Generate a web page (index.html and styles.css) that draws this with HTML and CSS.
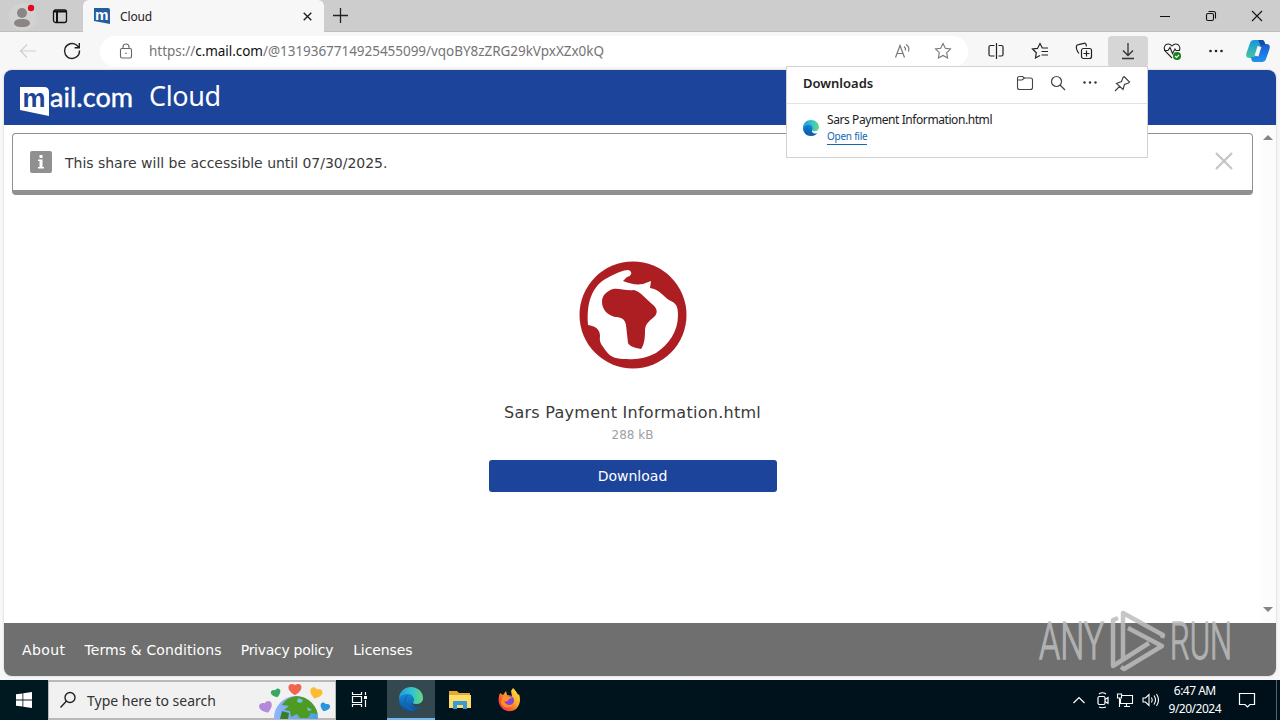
FILE: index.html
```
<!DOCTYPE html>
<html lang="en">
<head>
    <meta charset="UTF-8">
    <title>Cloud</title>
    <link rel="stylesheet" href="styles.css">
</head>
<body>
    <div class="browser">
        <div class="tab-strip">
            <div class="tab-tools">
                <svg width="30" height="30" viewBox="0 0 30 30"><circle cx="15" cy="15" r="14" fill="#d2d2d2"/><circle cx="14" cy="11" r="5" fill="#8b8684"/><path d="M6 22c0-4 3-5 8-5s8 1 8 5c-2 3-5 3-8 3s-6 0-8-3z" fill="#8b8684"/><circle cx="23" cy="6" r="3.2" fill="#e00b1c"/></svg>
                <svg class="tab-actions" width="16" height="16" viewBox="0 0 16 16" fill="none" stroke="#111" stroke-width="1.3"><rect x="1.5" y="1" width="13" height="12.5" rx="2"/><path d="M2 2.500h12M5 3.500v10" stroke-width="2"/></svg>
            </div>
            <div class="tab">
                <svg width="16" height="16" viewBox="0 0 16 16"><path d="M0 0h14q2 0 2 2v14L0 13z" fill="#245d9f"/><text x="1" y="11.5" class="badge-letter" font-size="14" textLength="13.5" lengthAdjust="spacingAndGlyphs" fill="#fff">m</text></svg>
                <span class="tab-title">Cloud</span>
                <svg class="tab-close" width="9" height="9" viewBox="0 0 9 9" stroke="#222" stroke-width="1.4"><path d="M.7.7l7.6 7.6M8.3.7L.7 8.3"/></svg>
            </div>
            <svg class="new-tab" width="15" height="15" viewBox="0 0 15 15" stroke="#222" stroke-width="1.3"><path d="M7.5 0v15M0 7.5h15"/></svg>
            <div class="window-buttons">
                <svg width="12" height="12" viewBox="0 0 12 12" stroke="#111"><path d="M1 6.5h10"/></svg>
                <svg width="12" height="12" viewBox="0 0 12 12" fill="none" stroke="#111" stroke-width="1.1"><rect x="1.5" y="3.5" width="7" height="7" rx="1.5"/><path d="M3.5 1.5h5q2 0 2 2v5"/></svg>
                <svg width="12" height="12" viewBox="0 0 12 12" stroke="#111" stroke-width="1.1"><path d="M1 1l10 10M11 1L1 11"/></svg>
            </div>
        </div>

        <div class="toolbar">
            <div class="nav-buttons">
                <svg width="18" height="18" viewBox="0 0 18 18" fill="none" stroke="#cfcfcf" stroke-width="1.2"><path d="M17 9H1.5M8 2.5L1.5 9 8 15.5"/></svg>
                <svg width="18" height="18" viewBox="0 0 18 18" fill="none" stroke="#222" stroke-width="1.4"><path d="M16.5 8.500a7.500 7.500 0 1 1-3-5.500l2.500 2.500M16.300 1v4.700h-4.700"/></svg>
            </div>
            <div class="address-bar">
                <svg width="14" height="16" viewBox="0 0 14 16" fill="none" stroke="#666" stroke-width="1.1"><rect x="1.5" y="5.5" width="11" height="9.5" rx="1.5"/><path d="M4 5.500V4a3 3 0 0 1 6 0v1.500"/><circle cx="7" cy="10.3" r=".8" fill="#666" stroke="none"/></svg>
                <span class="url">https://<b>c.mail.com</b>/@1319367714925455099/vqoBY8zZRG29kVpxXZx0kQ</span>
                <svg class="read-aloud" width="18" height="16" viewBox="0 0 18 16" fill="none" stroke="#777" stroke-width="1.2"><path d="M1.500 14.500L6 2.500l4.500 12M3 10.500h6M10 3.500q2 1.500 1.500 4M12 1.500q4 2.500 2.500 7"/></svg>
                <svg class="star" width="18" height="18" viewBox="0 0 18 18" fill="none" stroke="#777" stroke-width="1.1"><path d="M9 1.500l2.300 4.800 5.200.700-3.800 3.700.9 5.300L9 13.500 4.400 16l.9-5.300L1.500 7l5.200-.7z"/></svg>
            </div>
            <div class="toolbar-buttons">
                <span class="tool"><svg width="18" height="18" viewBox="0 0 18 18" fill="none" stroke="#222" stroke-width="1.2"><path d="M9.500 1v16M7.500 3.500H3.500Q2 3.500 2 5v7.500Q2 14 3.500 14h4M11.500 3.500h3Q16 3.500 16 5v7.500q0 1.500-1.500 1.500h-3"/></svg></span>
                <span class="tool"><svg width="18" height="18" viewBox="0 0 18 18" fill="none" stroke="#222" stroke-width="1.2"><path d="M9 13.500L4.500 16l.8-5.300L1.500 7l5-.6L9 1.500l2.300 4.500H17M10.500 9.500H17M10.500 13H17"/></svg></span>
                <span class="tool"><svg width="18" height="18" viewBox="0 0 18 18" fill="none" stroke="#222" stroke-width="1.2"><rect x="6.500" y="6.500" width="10" height="10" rx="2"/><path d="M11.500 8.500v6M8.500 11.500h6M4 11.500C2 9 1 6 1.500 4q0-1 2-1.300L9 1.300q1.500-.4 2 1l.5 2"/></svg></span>
                <span class="tool active"><svg width="18" height="18" viewBox="0 0 18 18" fill="none" stroke="#333" stroke-width="1.3"><path d="M9 1v12M4 8.500l5 5 5-5M3 16.500h12"/></svg></span>
                <span class="tool"><svg width="18" height="18" viewBox="0 0 18 18" fill="none" stroke="#222" stroke-width="1.1"><path d="M9 16L2.500 9.500Q0 6 2.500 3q3.500-2.500 6.500 1 3-3.500 6.500-1Q18 6 16 8.500M1 8.500h4l2-3 2.500 6L12 7l1 1.500h4"/><circle cx="14" cy="14" r="4" fill="#16821b" stroke="none"/><path d="M12 14l1.500 1.500L16 13" stroke="#fff"/></svg></span>
                <span class="tool"><svg width="14" height="4" viewBox="0 0 14 4" fill="#222"><circle cx="1.500" cy="2" r="1.300"/><circle cx="7" cy="2" r="1.300"/><circle cx="12.500" cy="2" r="1.300"/></svg></span>
                <span class="tool copilot"><svg width="24" height="24" viewBox="0 0 24 24">
                    <defs>
                        <linearGradient id="cpLeft" x1="0" y1="0" x2="0" y2="1"><stop offset="0" stop-color="#1a94e0"/><stop offset="1" stop-color="#42c89a"/></linearGradient>
                        <linearGradient id="cpRight" x1="0" y1="0" x2="0" y2="1"><stop offset="0" stop-color="#1a5bd0"/><stop offset="1" stop-color="#2190f5"/></linearGradient>
                    </defs>
                    <path d="M8 1h8q2 0 2.500 2l1 3h-5L11 17q-1 2-3 2H4q-5 0-3.500-5L4 4q1-3 4-3z" fill="url(#cpLeft)"/>
                    <path d="M16 23H8q-2 0-2.500-2L5 18h3q2 0 3-3l2.500-8q.7-2 3-2H20q5 0 3.500 5L20 20q-1 3-4 3z" fill="url(#cpRight)"/>
                    <path d="M13.500 7.500L10.500 17" stroke="#f7f7f7" stroke-width="4"/>
                    <path d="M12 1h4q2 0 2.500 2l1 3h-5z" fill="#154c9c"/>
                </svg></span>
            </div>
        </div>

        <div class="page">
            <div class="page-header">
                <svg class="logo" width="114" height="34" viewBox="0 0 114 34">
                    <path d="M0 3h24q5 0 5 5v24L0 26z" fill="#fff"/>
                    <text x="2.500" y="22.500" class="badge-letter" font-size="26" textLength="23" lengthAdjust="spacingAndGlyphs" fill="#1c449b">m</text>
                    <text x="30" y="23" class="logo-text" font-size="27" textLength="83" lengthAdjust="spacingAndGlyphs" fill="#fff">ail.com</text>
                </svg>
                <span class="page-title">Cloud</span>
            </div>
            <div class="page-body">
                <div class="content">
                    <div class="notice">
                        <span class="info-icon"><svg width="22" height="22" viewBox="0 0 22 22" fill="#fff"><rect x="9.500" y="4" width="3" height="3"/><path d="M8 8.500h4.500V16H14v1.500H8V16h1.500v-6H8z"/></svg></span>
                        <span class="notice-text">This share will be accessible until 07/30/2025.</span>
                        <svg class="notice-close" width="18" height="18" viewBox="0 0 18 18" stroke="#c4c4c4" stroke-width="2.200"><path d="M1 1l16 16M17 1L1 17"/></svg>
                    </div>
                    <div class="share">
                        <svg class="globe" width="108" height="108" viewBox="0 0 108 108">
                            <circle cx="54" cy="54" r="53.500" fill="#ad1e23"/>
                            <path d="M9 64C7 38 15 23 30 16c8-4 14-7 19-7 5 1 4 6-1 7l-4 4c8 3 13 4 20 3l8-3-1 7c9 1 13 8 19 12 7 3 9 6 9 15 0 17-9 29-22 38-10 5-19 7-29 6-10 0-16-1-21-8-4-6-7-8-6-15 0-7-5-10-12-11z" fill="#fff"/>
                            <path d="M23 41c0-7 5-11 11-13 6-1 13 2 21 1 7 2 12 9 18 14 5 4 6 8 3 12-5 5-10 7-10 15 0 8-1 14-4 18-6-1-12-3-13-6l-2-18c-1-6-5-8-11-8-8-2-13-8-13-15z" fill="#ad1e23"/>
                        </svg>
                        <div class="file-name">Sars Payment Information.html</div>
                        <div class="file-size">288 kB</div>
                        <button class="download">Download</button>
                    </div>
                </div>
                <div class="scrollbar">
                    <span class="arrow-up"></span>
                    <span class="arrow-down"></span>
                </div>
            </div>
            <div class="page-footer">
                <a class="link-about">About</a>
                <a class="link-terms">Terms &amp; Conditions</a>
                <a class="link-privacy">Privacy policy</a>
                <a class="link-licenses">Licenses</a>
            </div>
        </div>

        <div class="downloads">
            <div class="downloads-header">
                <span class="downloads-title">Downloads</span>
                <svg width="18" height="16" viewBox="0 0 18 16" fill="none" stroke="#444" stroke-width="1.1"><path d="M1.500 3.500q0-2 2-2h3L8.500 3H14.500q2 0 2 2v7.500q0 2-2 2h-11q-2 0-2-2zM1.500 5H6l2.500-2"/></svg>
                <svg width="16" height="16" viewBox="0 0 16 16" fill="none" stroke="#444" stroke-width="1.2"><circle cx="6.500" cy="6.500" r="5"/><path d="M10 10l5 5"/></svg>
                <svg width="16" height="16" viewBox="0 0 16 16" fill="#333"><circle cx="2.500" cy="7.500" r="1.200"/><circle cx="8" cy="7.500" r="1.200"/><circle cx="13.500" cy="7.500" r="1.200"/></svg>
                <svg width="17" height="17" viewBox="0 0 17 17" fill="none" stroke="#444" stroke-width="1.2"><path d="M10 1.500l5.500 5.500-1 1-4 1.500-1.500 5-6.500-6 5-2L9 2.500zM6 11l-5 5"/></svg>
            </div>
            <div class="download-item">
                <svg class="item-icon" width="16" height="16" viewBox="0 0 24 24"><use href="#edge"/></svg>
                <div class="item-info">
                    <div class="item-name">Sars Payment Information.html</div>
                    <a class="item-open">Open file</a>
                </div>
            </div>
        </div>

        <svg class="watermark" width="196" height="64" viewBox="0 0 196 64">
            <text x="1" y="51" textLength="65" lengthAdjust="spacingAndGlyphs">ANY</text>
            <text x="132" y="51" textLength="62" lengthAdjust="spacingAndGlyphs">RUN</text>
            <g fill="none" stroke-width="4.500" stroke-linejoin="round">
                <path d="M80 10l-5 2v46l36-23M85 52V5l40 22-1 3M90 20l34 18-38 23-3-2"/>
            </g>
        </svg>
    </div>

    <div class="taskbar">
        <div class="start"><svg width="16" height="16" viewBox="0 0 16 16" fill="#fff"><path d="M0 2.300L6.500 1.400v6.200H0zM7.300 1.300L16 0v7.600H7.300zM0 8.400h6.500v6.200L0 13.700zM7.300 8.400H16V16l-8.700-1.300z"/></svg></div>
        <div class="search">
            <svg width="18" height="18" viewBox="0 0 18 18" fill="none" stroke="#222" stroke-width="1.4"><circle cx="11" cy="6.500" r="5"/><path d="M7.500 10L1.500 16.500"/></svg>
            <span class="search-text">Type here to search</span>
            <svg class="search-art" width="76" height="38" viewBox="0 0 76 38">
                <defs>
                    <path id="heart" d="M0 6C-11 0-6-8 0-4 6-8 11 0 0 6z"/>
                    <linearGradient id="sea"><stop offset="0" stop-color="#8fb4ff"/><stop offset="1" stop-color="#4c9fe0"/></linearGradient>
                    <clipPath id="earth"><circle cx="38" cy="37" r="22"/></clipPath>
                </defs>
                <circle cx="38" cy="37" r="22" fill="url(#sea)"/>
                <g clip-path="url(#earth)" fill="#4f9a22">
                    <path d="M24 24c5-8 14-10 22-8 8 4 13 12 14 17l-7-1-3 5h-8l-3-4-6 3-1-6-6-1 5-4z"/>
                    <path d="M24 30l7 2-1 6h-8z" fill="#357d2a"/>
                    <path d="M40 17l5 2-2 3-4-1zM49 26l5 3-4 1z" fill="#6cc5ee"/>
                </g>
                <use href="#heart" x="37" y="8" fill="#f06450"/>
                <use href="#heart" transform="translate(18 12) rotate(-18) scale(.75)" fill="#37a862"/>
                <use href="#heart" transform="translate(58 12) rotate(18) scale(.95)" fill="#fdbb32"/>
                <use href="#heart" transform="translate(8 26) rotate(-20)" fill="#b488da"/>
                <use href="#heart" transform="translate(67 26) rotate(18) scale(.75)" fill="#2b94dc"/>
            </svg>
        </div>
        <div class="task task-view"><svg width="18" height="18" viewBox="0 0 18 18" fill="none" stroke="#fff" stroke-width="1.2"><path d="M1.500 1v2.500h9V1M1.500 16v-2.500h9V16M1.500 5.500h9v6h-9zM14.500 1v3M14.500 9v7"/><path d="M13 6.500h3" stroke-width="3"/></svg></div>
        <div class="task open">
            <svg width="24" height="24" viewBox="0 0 24 24">
                <defs>
                    <linearGradient id="edgeTop" x1="0" y1="0" x2="1" y2="0"><stop offset="0" stop-color="#249bd9"/><stop offset=".55" stop-color="#33c4cf"/><stop offset="1" stop-color="#68d97a"/></linearGradient>
                    <linearGradient id="edgeLow" x1="0" y1="0" x2="0" y2="1"><stop offset="0" stop-color="#128bd9"/><stop offset="1" stop-color="#0753a0"/></linearGradient>
                </defs>
                <g id="edge">
                    <path d="M0 12C0 5 5 0 12 0s12 5 12 11c0 4-3 6-7 6-2 0-4-1-3-2 2-2 0-7-5-7-4 0-7 2-9 4z" fill="url(#edgeTop)"/>
                    <path d="M0 12c1-4 5-5 9-5 5 0 7 5 5 8-1 1-1 4 2 5 2 1 4 0 6-1-2 3-6 5-10 5C5 24 0 19 0 12z" fill="url(#edgeLow)"/>
                    <path d="M9 8c-5 6 0 14 7 15-5 2-11-2-11-8 0-3 1-6 4-7z" fill="#1766b5"/>
                </g>
            </svg>
        </div>
        <div class="task"><svg width="22" height="20" viewBox="0 0 22 20"><path d="M0 1h8l2 2h11v15H0z" fill="#e7a92c"/><path d="M0 5h22v13H0z" fill="#ffda6c"/><path d="M4 19v-7q0-1 1-1h12q1 0 1 1v7h-4v-4H8v4z" fill="#369ad4"/></svg></div>
        <div class="task"><svg width="24" height="24" viewBox="0 0 24 24">
            <defs><linearGradient id="fire" x1="1" y1="0" x2="0" y2="1"><stop offset="0" stop-color="#fff04a"/><stop offset=".4" stop-color="#ffad25"/><stop offset=".7" stop-color="#ff542e"/><stop offset="1" stop-color="#e62083"/></linearGradient></defs>
            <path d="M3 5l3 2 3-4 1 4 5 1-1-5 2-3c2 2 4 4 5 7l1-1c2 6 1 11-3 15-7 5-15 1-17-6-1-4 0-7 1-10z" fill="url(#fire)"/>
            <circle cx="12" cy="12.500" r="5" fill="#8245dc"/><path d="M6 9c3-2 7-1 9 1l-3 1c-1 3-4 3-5 2 2 5 8 5 10 1-1 7-12 8-13 0z" fill="#ff9025"/>
        </svg></div>
        <div class="tray">
            <svg width="14" height="16" viewBox="0 0 14 16" fill="none" stroke="#fff" stroke-width="1.2"><path d="M1.500 11L7 5.500l5.500 5.500"/></svg>
            <svg class="meet" width="14" height="18" viewBox="0 0 14 18" fill="none" stroke="#fff" stroke-width="1.2"><rect x="2" y="5.500" width="7" height="8" rx="1.500"/><path d="M9 8.500l3-2v6l-3-2M3 3q3-2.500 7 0M3 16q3 1.500 7 0"/></svg>
            <svg width="18" height="16" viewBox="0 0 18 16" fill="none" stroke="#fff" stroke-width="1.1"><path d="M6 3.500h10.500v8H4.500V7M8 14.500h6M10.500 12v2.500M1.500 2h4v4h-4zM3.500 6v9"/></svg>
            <svg class="volume" width="18" height="16" viewBox="0 0 18 16" fill="none" stroke="#fff" stroke-width="1.1"><path d="M1 6h2.500L7 2.500v11L3.500 10H1zM9.500 5.500q1.500 2.500 0 5M12 3.500q3 4.500 0 9M14.500 2q4 6 0 12"/></svg>
            <div class="clock">
                <span class="time">6:47 AM</span>
                <span class="date">9/20/2024</span>
            </div>
            <svg class="action-center" width="18" height="18" viewBox="0 0 18 18" fill="none" stroke="#fff" stroke-width="1.2"><path d="M1.500 2.500h15v11H12L9.500 16 7 13.500H1.500z"/></svg>
            <span class="show-desktop"></span>
        </div>
    </div>
</body>
</html>
```
FILE: styles.css
```
* {
    box-sizing: border-box;
}
body {
    margin: 0;
    width: 1280px;
    height: 720px;
    overflow: hidden;
    font-family: "Noto Sans", "Open Sans", sans-serif;
    color: #222;
    background-color: #f7f7f7;
}
svg {
    display: block;
    flex: none;
    overflow: visible;
}
.browser {
    position: relative;
    height: 680px;
    padding: 0 4px 4px;
}
.tab-strip {
    display: flex;
    height: 32px;
    margin: 0 -4px;
    background-color: #cdcdcd;
    border-bottom: 1px solid #bebebe;
}
.tab-tools {
    display: flex;
    align-items: center;
    width: 83px;
    padding: 2px 0 0 8px;
}
.tab-actions {
    margin-left: 14px;
}
.tab {
    display: flex;
    align-items: center;
    width: 241px;
    height: 32px;
    padding: 0 12px 0 11px;
    background-color: #f7f7f7;
    border-radius: 6px 6px 0 0;
}
.tab-title {
    flex: 1;
    margin-left: 10px;
    font-size: 12px;
    letter-spacing: -0.15px;
    white-space: nowrap;
}
.new-tab {
    margin: 8px 0 0 9px;
}
.window-buttons {
    display: flex;
    align-items: center;
    gap: 34px;
    margin-left: auto;
    padding-right: 17px;
}
.badge-letter {
    font-family: "Liberation Sans", sans-serif;
    font-weight: bold;
}
.toolbar {
    display: flex;
    align-items: center;
    height: 38px;
    margin: 0 -4px;
}
.nav-buttons {
    display: flex;
    flex: none;
    gap: 26px;
    width: 100px;
    padding-left: 19px;
}
.address-bar {
    display: flex;
    flex: none;
    align-items: center;
    width: 868px;
    height: 31px;
    padding: 0 16px 0 19px;
    background-color: #fff;
    border-radius: 16px;
}
.url {
    margin-left: 16px;
    font-size: 13.5px;
    letter-spacing: -0.04px;
    color: #757575;
    white-space: nowrap;
}
.url b {
    font-weight: normal;
    color: #111;
}
.read-aloud {
    margin-left: auto;
}
.star {
    margin-left: 22px;
}
.toolbar-buttons {
    display: flex;
    flex: none;
    margin-left: 6px;
}
.tool {
    display: flex;
    flex: none;
    align-items: center;
    justify-content: center;
    width: 40px;
    height: 31px;
    margin: 0 2px;
    border-radius: 4px;
}
.tool.active {
    background-color: #d6d6d6;
}
.tool.copilot {
    width: 36px;
}
.page {
    display: flex;
    flex-direction: column;
    height: 606px;
    overflow: hidden;
    background-color: #fff;
    border-radius: 8px;
    box-shadow: 0 0 2px #bbb;
    font-family: Verdana, "DejaVu Sans", sans-serif;
}
.page-header {
    display: flex;
    height: 55px;
    padding: 14px 16px 0;
    background-color: #1c449b;
}
.logo-text {
    font-family: Lato, sans-serif;
    stroke: #fff;
    stroke-width: 0.4px;
}
.page-title {
    margin: -8px 0 0 15px;
    font-family: "Noto Sans", sans-serif;
    font-size: 27px;
    line-height: 40px;
    letter-spacing: -0.4px;
    color: #fff;
}
.page-body {
    display: flex;
    flex: 1;
}
.content {
    flex: 1;
    padding: 8px 7px 0 8px;
}
.notice {
    display: flex;
    align-items: center;
    height: 62px;
    padding: 0 19px 0 17px;
    border: 1px solid #909090;
    border-bottom-width: 5px;
    border-radius: 4px;
}
.info-icon {
    width: 22px;
    height: 22px;
    background-color: #909090;
    border-radius: 2px;
}
.notice-text {
    margin: 2px 0 0 13px;
    font-size: 14px;
    letter-spacing: -0.02px;
    color: #3a3a3a;
}
.notice-close {
    margin: -2px 0 0 auto;
}
.share {
    display: flex;
    flex-direction: column;
    align-items: center;
    padding-top: 66px;
}
.file-name {
    margin-top: 33px;
    font-size: 16px;
    line-height: 22px;
    letter-spacing: 0.27px;
    color: #3a3a3a;
}
.file-size {
    margin-top: 3px;
    font-size: 12px;
    line-height: 16px;
    color: #a0a0a0;
}
.download {
    width: 288px;
    height: 32px;
    margin-top: 17px;
    padding: 0;
    border: none;
    border-radius: 3px;
    background-color: #1c449b;
    color: #fff;
    font-family: inherit;
    font-size: 14px;
}
.scrollbar {
    display: flex;
    flex-direction: column;
    align-items: center;
    justify-content: space-between;
    width: 16px;
    padding: 10px 0 11px;
    background-color: #fcfcfc;
}
.arrow-up, .arrow-down {
    border: 5px solid transparent;
}
.arrow-up {
    border-top: none;
    border-bottom-color: #858585;
}
.arrow-down {
    border-bottom: none;
    border-top-color: #858585;
}
.page-footer {
    display: flex;
    gap: 19px;
    height: 53px;
    padding: 1px 0 0 18px;
    line-height: 53px;
    font-size: 14px;
    color: #fff;
    background-color: #6f6f6f;
}
.link-about {
    letter-spacing: 0.4px;
}
.link-terms {
    letter-spacing: 0.12px;
}
.link-privacy {
    letter-spacing: -0.28px;
}
.link-licenses {
    margin-left: 1px;
    letter-spacing: -0.1px;
}
.downloads {
    position: absolute;
    top: 66px;
    left: 786px;
    width: 362px;
    height: 92px;
    background-color: #fff;
    border: 1px solid #d2d2d2;
}
.downloads-header {
    display: flex;
    align-items: center;
    gap: 16px;
    height: 37px;
    padding: 0 16px 4px;
    border-bottom: 1px solid #e2e2e2;
}
.downloads-title {
    flex: 1;
    font-size: 13px;
    font-weight: 600;
}
.download-item {
    display: flex;
    align-items: center;
    padding: 8px 16px;
}
.item-icon {
    margin-top: -6px;
}
.item-info {
    margin-left: 8px;
}
.item-name {
    font-size: 12px;
    line-height: 16px;
    letter-spacing: -0.42px;
}
.item-open {
    display: inline-block;
    font-size: 10px;
    line-height: 16px;
    letter-spacing: -0.25px;
    color: #1267b4;
    border-bottom: 1px solid #1267b4;
    vertical-align: top;
}
.watermark {
    position: absolute;
    left: 1038px;
    top: 608px;
    font-family: "Roboto", sans-serif;
    font-size: 52px;
    font-weight: 300;
    fill: #bdbdbd;
    stroke: #bdbdbd;
    opacity: 0.85;
}
.watermark text {
    stroke-width: 1.4px;
}
.taskbar {
    display: flex;
    height: 40px;
    background: linear-gradient(90deg, #001820, #00101b);
    color: #fff;
}
.start {
    display: flex;
    align-items: center;
    justify-content: center;
    width: 48px;
}
.search {
    display: flex;
    align-items: center;
    width: 288px;
    padding-left: 10px;
    background-color: #f1f1f1;
    border: 1px solid #b8b8b8;
    border-width: 2px 1px;
    color: #333;
}
.search-text {
    margin-left: 10px;
    font-size: 14px;
    white-space: nowrap;
}
.search-art {
    margin: 0 1px 0 auto;
    overflow: hidden;
}
.task {
    display: flex;
    align-items: center;
    justify-content: center;
    width: 49px;
}
.task-view {
    width: 51px;
    padding-right: 3px;
}
.task.open {
    width: 48px;
    background-color: #344850;
    border-bottom: 2px solid #77b7ed;
}
.tray {
    display: flex;
    align-items: center;
    margin-left: auto;
}
.tray svg {
    margin-right: 8px;
}
.tray .meet {
    margin: 0 6px 0 2px;
}
.tray .volume {
    margin-right: 9px;
}
.clock {
    display: flex;
    flex-direction: column;
    align-items: center;
    font-size: 12px;
    line-height: 18px;
    letter-spacing: -0.5px;
}
.tray .action-center {
    margin: 0 20px 0 17px;
}
.show-desktop {
    width: 4px;
    height: 40px;
    border-left: 1px solid #59636b;
}
```
